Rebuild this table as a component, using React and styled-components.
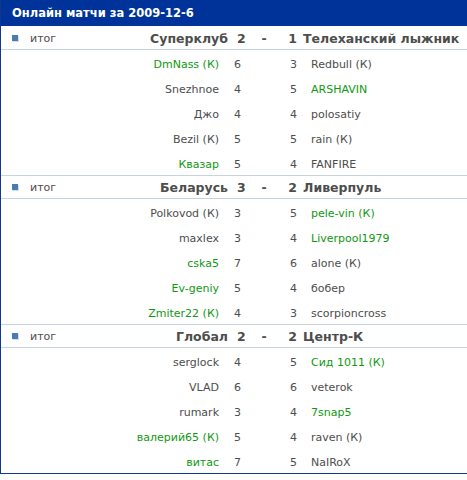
import React from 'react';
import styled, {createGlobalStyle} from "styled-components";

const GlobalStyle = createGlobalStyle`
  html, body {
    margin: 0;
    padding: 0;
    background: #ffffff;
  }
  body {
    font-family: "DejaVu Sans", Verdana, sans-serif;
  }
`;

const Frame = styled.div`
  width: 466px;
  border-left: 1px solid #0f3a8c;
  border-bottom: 1px solid #0f3a8c;
  background: #fff;
`;

const Title = styled.div`
  height: 26px;
  background-color: #003399;
  color: #fff;
  font-weight: bold;
  font-size: 11.5px;
  line-height: 26px;
  padding-left: 11px;
  border-bottom: 1px solid #fff;
`;

const Match = styled.div`
  border-top: ${p => (p.first ? "none" : "1px solid #c8d3e2")};
`;

const Row = styled.div`
  display: grid;
  grid-template-columns: 228px 22px 26px 20px 1fr;
  align-items: center;
  box-sizing: border-box;
  height: ${p => (p.head ? "23px" : "25px")};
  padding-top: ${p => (p.head ? "0" : "3px")};
  border-bottom: ${p => (p.head ? "1px solid #c8d3e2" : "none")};
  font-size: ${p => (p.head ? "12.5px" : "11px")};
  font-weight: ${p => (p.head ? "bold" : "normal")};
  color: #4d4d4d;
`;

const Left = styled.div`
  display: flex;
  align-items: center;
  justify-content: space-between;
  padding-right: ${p => (p.head ? "1px" : "10px")};
  white-space: nowrap;
`;

const Label = styled.span`
  display: flex;
  align-items: center;
  gap: 12px;
  padding-left: 11px;
  font-size: 11px;
  font-weight: normal;
  color: #4d4d4d;
`;

const Bullet = styled.span`
  width: 6px;
  height: 6px;
  background: #4a7cb0;
  box-shadow: 1px 1px 0 #d6dce6;
`;

const Name = styled.span`
  color: ${p => (p.green ? "#119911" : "inherit")};
  margin-left: auto;
`;

const Score = styled.div`
  text-align: ${p => p.align || "left"};
  padding-left: ${p => p.pl || 0}px;
`;

const Dash = styled.div`
  text-align: center;
`;

const RightName = styled.div`
  padding-left: ${p => (p.head ? "6px" : "14px")};
  color: ${p => (p.green ? "#119911" : "inherit")};
  white-space: nowrap;
`;

const matches = [
  {
    home: "Суперклуб", away: "Телеханский лыжник", hs: 2, as: 1,
    rows: [
      ["DmNass (К)", true, 6, 3, "Redbull (К)", false],
      ["Snezhnoe", false, 4, 5, "ARSHAVIN", true],
      ["Джо", false, 4, 4, "polosatiy", false],
      ["Bezil (К)", false, 5, 5, "rain (К)", false],
      ["Квазар", true, 5, 4, "FANFIRE", false],
    ],
  },
  {
    home: "Беларусь", away: "Ливерпуль", hs: 3, as: 2,
    rows: [
      ["Polkovod (К)", false, 3, 5, "pele-vin (К)", true],
      ["maxlex", false, 3, 4, "Liverpool1979", true],
      ["cska5", true, 7, 6, "alone (К)", false],
      ["Ev-geniy", true, 5, 4, "бобер", false],
      ["Zmiter22 (К)", true, 4, 3, "scorpioncross", false],
    ],
  },
  {
    home: "Глобал", away: "Центр-К", hs: 2, as: 2,
    rows: [
      ["serglock", false, 4, 5, "Сид 1011 (К)", true],
      ["VLAD", false, 6, 6, "veterok", false],
      ["rumark", false, 3, 4, "7snap5", true],
      ["валерий65 (К)", true, 5, 4, "raven (К)", false],
      ["витас", true, 7, 5, "NaIRoX", false],
    ],
  },
];

export default function App() {
  return (
    <>
      <GlobalStyle/>
      <Frame>
        <Title>Онлайн матчи за 2009-12-6</Title>
        {matches.map((m, i) => (
          <Match key={i} first={i === 0}>
            <Row head>
              <Left head>
                <Label><Bullet/>итог</Label>
                <Name>{m.home}</Name>
              </Left>
              <Score pl={8}>{m.hs}</Score>
              <Dash>-</Dash>
              <Score align="right">{m.as}</Score>
              <RightName head>{m.away}</RightName>
            </Row>
            {m.rows.map((r, j) => (
              <Row key={j}>
                <Left><Name green={r[1]}>{r[0]}</Name></Left>
                <Score pl={5}>{r[2]}</Score>
                <Dash/>
                <Score align="right">{r[3]}</Score>
                <RightName green={r[5]}>{r[4]}</RightName>
              </Row>
            ))}
          </Match>
        ))}
      </Frame>
    </>
  );
}
